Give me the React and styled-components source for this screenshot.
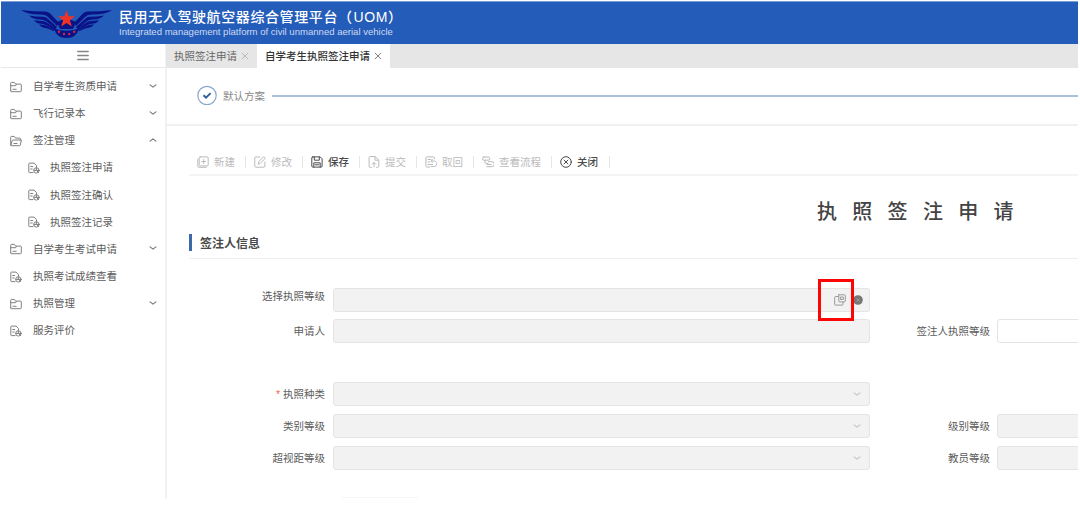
import React from 'react';
import styled, { createGlobalStyle } from 'styled-components';

const GlobalStyle = createGlobalStyle`
  * {
    box-sizing: border-box;
  }
  body {
    margin: 0;
    background: #fff;
    overflow: hidden;
    font-family: 'Liberation Sans', 'Noto Sans CJK SC', sans-serif;
    font-size: 10.5px;
    color: #5c5c5c;
  }
`;

const Page = styled.div`
  width: 1077px;
  height: 498px;
  margin: 1px 0 0 1px;
  display: flex;
  flex-direction: column;
  overflow: hidden;
  white-space: nowrap;
`;

const Header = styled.header`
  height: 43px;
  flex: none;
  display: flex;
  align-items: flex-start;
  padding: 8px 0 0 20px;
  background: #245cb9;
  border-top: 1px solid #7d9fd6;
  color: #fff;
`;

const Titles = styled.div`
  margin: -1px 0 0 7px;
`;

const Title = styled.h1`
  margin: 0;
  height: 17px;
  line-height: 17px;
  font-size: 14px;
  font-weight: 500;
  letter-spacing: 0.6px;

  .latin {
    margin-left: 1px;
  }
`;

const SubTitle = styled.div`
  height: 12px;
  line-height: 12px;
  font-size: 9.6px;
  letter-spacing: -0.02px;
  color: #cbdaf3;
`;

const Body = styled.div`
  display: flex;
  flex: 1;
  min-height: 0;
`;

const Sidebar = styled.aside`
  width: 166px;
  flex: none;
  border-right: 2px solid #f1f1f1;
`;

const Toggle = styled.div`
  height: 24px;
  display: flex;
  align-items: center;
  justify-content: center;
  border-bottom: 1px solid #e8e8e8;
`;

const Menu = styled.nav`
  padding-top: 4px;
`;

const MenuItem = styled.div`
  height: 27.15px;
  display: flex;
  align-items: center;
  padding: 0 7px 0 ${(p) => (p.$sub ? 27 : 9)}px;

  svg:first-child {
    margin-top: 2px;
  }
  .label {
    flex: 1;
    margin-left: ${(p) => (p.$sub ? 10 : 11)}px;
  }
`;

const Main = styled.main`
  flex: 1;
  min-width: 0;
  margin-left: -1px;
`;

const Tabs = styled.div`
  height: 24px;
  display: flex;
  background: #e6e6e6;
`;

const Tab = styled.div`
  display: flex;
  align-items: center;
  gap: 4px;
  padding: 0 8px 1px;
  background: ${(p) => (p.$active ? '#fff' : '#e6e6e6')};
  color: ${(p) => (p.$active ? '#333' : '#666')};
  font-weight: ${(p) => (p.$active ? 500 : 400)};
`;

const Steps = styled.div`
  height: 58px;
  display: flex;
  align-items: center;
  padding: 0 0 2px 31px;
  border-bottom: 2px solid #f0f0f0;
  color: #888;

  .name {
    margin: 0 7px 0 6px;
  }
`;

const StepLine = styled.div`
  flex: 1;
  height: 2px;
  margin-top: 2px;
  background: #a9c0dc;
`;

const Toolbar = styled.div`
  height: 27px;
  margin: 23px 0 0 23px;
  display: flex;
  align-items: center;
  padding-left: 8px;
  border-bottom: 2px solid #f4f4f4;
`;

const Tool = styled.div`
  width: ${(p) => p.$width}px;
  height: 12px;
  margin-right: 8px;
  display: flex;
  align-items: center;
  gap: 5px;
  border-right: 1px solid #e6e6e6;
  color: ${(p) => (p.$on ? '#4a4a4a' : '#bbb')};
  font-weight: ${(p) => (p.$on ? 500 : 400)};
`;

const FormTitle = styled.h2`
  height: 53px;
  line-height: 73px;
  margin: 0 0 0 651px;
  font-size: 20px;
  font-weight: 500;
  letter-spacing: 15.3px;
  color: #444;
`;

const Section = styled.div`
  height: 30px;
  margin-left: 23px;
  padding-bottom: 2px;
  display: flex;
  align-items: center;
  border-bottom: 1px solid #efefef;
  font-size: 12px;
  font-weight: 700;
  color: #4a4a4a;

  &::before {
    content: '';
    width: 3px;
    height: 17px;
    margin-right: 8px;
    background: #3a6aa8;
  }
`;

const Form = styled.div`
  padding-top: 28.5px;
`;

const FormRow = styled.div`
  height: 24px;
  display: flex;
  margin-bottom: ${(p) => p.$gap}px;
`;

const Label = styled.div`
  width: ${(p) => p.$width}px;
  flex: none;
  padding-right: ${(p) => (p.$tight ? 7 : 8)}px;
  line-height: ${(p) => (p.$raised ? 17 : 24)}px;
  text-align: right;

  .required {
    margin-right: 3px;
    color: #f0694a;
  }
`;

const Field = styled.div`
  width: 537px;
  height: 24px;
  flex: none;
  display: flex;
  align-items: center;
  justify-content: flex-end;
  padding-right: ${(p) => (p.$picker ? 6 : 7)}px;
  background: ${(p) => (p.$editable ? '#fff' : '#f2f2f2')};
  border: 1px solid #e4e4e4;
  border-radius: 3px;
`;

// taller than its field, so it has to stay above the next row
const Picker = styled.div`
  position: relative;
  z-index: 1;
  width: 36px;
  height: 42px;
  flex: none;
  display: flex;
  align-items: center;
  justify-content: center;
  padding-left: 8px;
  border: 3px solid #fb0505;
`;

const BottomEdge = styled.div`
  width: 76px;
  height: 1px;
  margin: 27px 0 0 176px;
  background: #f5f5f5;
`;

const Icon = ({ size = 12, color = 'currentColor', width = 1, children }) => (
  <svg
    width={size}
    height={size}
    viewBox="0 0 12 12"
    fill="none"
    stroke={color}
    strokeWidth={width}
    strokeLinecap="round"
    strokeLinejoin="round"
  >
    {children}
  </svg>
);

const icons = {
  folder: (
    <path d="M.7 9.8V2.2q0-.8.8-.8h2.8l1.2 1.7h5q.8 0 .8.8v6q0 .8-.8.8h-9q-.8 0-.8-.9ZM.7 4.7h5l.6-1.2M3 8.3h3.2" />
  ),
  open: (
    <path d="M.7 9.8V2.2q0-.8.8-.8h2.8l1.2 1.7h4.2q.7 0 .7.8v1M.8 10l1.5-4.4q.2-.6.8-.6h8.3l-1.1 5q-.2.7-.8.7h-8q-.8 0-.8-.9ZM4 8.5h3" />
  ),
  doc: (
    <>
      <path d="M5 10.6H1.5q-.7 0-.7-.7V1.8q0-.7.7-.7h4.6L8.5 3.7v1.5M2.7 4.5h2M2.7 7h1.5" />
      <circle cx="8.4" cy="8.4" r="2.7" fill="#fff" />
      <path d="M5.8 8.4h5.5M8.4 8.4l2.2 2.2M8.4 5.8v2.6" />
    </>
  ),
  add: (
    <path d="M3.2.9h7q1 0 1 1v7q0 1-1 1h-7q-1 0-1-1v-7q0-1 1-1ZM.8 3v7.3q0 1 1 1h7.5M6.7 3.5v4M4.7 5.5h4" />
  ),
  edit: (
    <path d="M6 1H1.8q-1 0-1 1v8.2q0 1 1 1h8.1q1 0 1-1V6M4.2 7.8l.4-2L9.7.7l1.6 1.6-5.1 5.1Z" />
  ),
  save: (
    <path d="M1.8.9h7.4l1.9 1.9v7.3q0 1-1 1H1.8q-1 0-1-1V1.9q0-1 1-1ZM3.3 1v3.2h5V1M2.8 11V6.8h6.4V11M4.2 8.8h3.6" />
  ),
  submit: (
    <path d="M3.5 11.3H2q-.9 0-.9-.9V1.5q0-.9.9-.9h5.2l3.6 3.5v6.3q0 .9-.9.9H8.5M7 .8v3.4h3.6M6 11V6.5M4.2 8.2 6 6.4l1.8 1.8" />
  ),
  back: (
    <path d="M5 11H1.8q-.9 0-.9-.9V1.8q0-.9.9-.9h6.6q.9 0 .9.9v1M3 3.5h3M3 6h2M3 8.5h4.5M6.3 10.5h2.2a2.8 2.8 0 1 0 0-5.5H6.3M7.6 3.7 6.2 5l1.4 1.3" />
  ),
  flow: (
    <path d="M2 1h4.2a1.6 1.6 0 0 1 0 3.2H2A1.6 1.6 0 0 1 2 1ZM3 4.2v2.2q0 .9 1 .9h2M6.4 5.7h3.4a1.5 1.5 0 0 1 0 5H4.8M5 8.5h4.2" />
  ),
  close: (
    <>
      <circle cx="6" cy="6" r="5.3" />
      <path d="m4.1 4.1 3.8 3.8M7.9 4.1 4.1 7.9" />
    </>
  ),
};

const Chevron = ({ up, color = '#777' }) => (
  <Icon size={10} color={color} width={1.4}>
    <path d={up ? 'm2.5 7.4 3.5-2.8 3.5 2.8' : 'm2.5 4.6 3.5 2.8 3.5-2.8'} />
  </Icon>
);

const Cross = ({ color }) => (
  <Icon size={8} color={color} width={1.4}>
    <path d="m1.8 1.8 8.4 8.4M10.2 1.8 1.8 10.2" />
  </Icon>
);

const Wing = () => (
  <>
    <path d="M0 0q13 1.5 24 1.5 4 0 6.5 3.5l7.5 8-2 3-8.5-8.5Q25 4.5 20 4.5 6 4.500 0 0Z" />
    <path d="M8 5.500q7 1.300 14 1.300 3 0 5 2.200l9 8-1.500 2-9-7.500q-2.500-2-6.500-2Q12 9.500 8 5.500Z" />
    <path d="M13 10.300q5 .7 8 .7 3 0 5 1.700l8 5.500v2.300l-8.500-5Q23 13.800 20 13.800 15.500 13.800 13 10.300Z" />
    <path d="M18 14.600q5-.3 8 1.500l7 4v1.200q-6-3-9-3.300-4-.4-6-3.400Z" />
  </>
);

// winged badge with a red star
const Logo = () => (
  <svg width="91" height="29" viewBox="0 0 91 29" fill="#0a1287">
    <Wing />
    <g transform="translate(91 0) scale(-1 1)">
      <Wing />
    </g>
    <path d="M33 18.500q12.500 4.500 25 0-2.500 9.500-12.500 9.500T33 18.500Z" />
    <path d="m36 12 5-2h9l5 2-3 7H39Z" />
    <path
      d="m45.500 0 2.100 6.200 6.500.1-5.200 4 1.900 6.300-5.300-3.700-5.300 3.700 1.900-6.300-5.200-4 6.500-.1Z"
      fill="#f03328"
    />
    <g fill="#d42845">
      <circle cx="38" cy="21.800" r="1.200" />
      <circle cx="43" cy="24" r="1.200" />
      <circle cx="48.200" cy="24" r="1.200" />
      <circle cx="53.200" cy="21.800" r="1.200" />
    </g>
  </svg>
);

const menu = [
  { text: '自学考生资质申请', icon: 'folder', arrow: 'down' },
  { text: '飞行记录本', icon: 'folder', arrow: 'down' },
  { text: '签注管理', icon: 'open', arrow: 'up' },
  { text: '执照签注申请', icon: 'doc', sub: true },
  { text: '执照签注确认', icon: 'doc', sub: true },
  { text: '执照签注记录', icon: 'doc', sub: true },
  { text: '自学考生考试申请', icon: 'folder', arrow: 'down' },
  { text: '执照考试成绩查看', icon: 'doc' },
  { text: '执照管理', icon: 'folder', arrow: 'down' },
  { text: '服务评价', icon: 'doc' },
];

const tools = [
  { text: '新建', icon: 'add', width: 49 },
  { text: '修改', icon: 'edit', width: 49 },
  { text: '保存', icon: 'save', width: 49, on: true },
  { text: '提交', icon: 'submit', width: 49 },
  { text: '取回', icon: 'back', width: 49 },
  { text: '查看流程', icon: 'flow', width: 70 },
  { text: '关闭', icon: 'close', width: 50, on: true },
];

const rows = [
  { label: '选择执照等级', picker: true, gap: 7.7 },
  { label: '申请人', right: '签注人执照等级', editable: true, gap: 39.3 },
  { label: '执照种类', required: true, select: true, gap: 7.7 },
  { label: '类别等级', select: true, right: '级别等级', gap: 7.7 },
  { label: '超视距等级', select: true, right: '教员等级', gap: 0 },
];

export default function App() {
  return (
    <>
      <GlobalStyle />
      <Page>
        <Header>
          <Logo />
          <Titles>
            <Title>
              民用无人驾驶航空器综合管理平台（<span className="latin">UOM</span>）
            </Title>
            <SubTitle>
              Integrated management platform of civil unmanned aerial vehicle
            </SubTitle>
          </Titles>
        </Header>

        <Body>
          <Sidebar>
            <Toggle>
              <Icon color="#858585" width={1.4}>
                <path d="M.8 1.5h10.4M.8 5.5h10.4M.8 9.5h10.4" />
              </Icon>
            </Toggle>
            <Menu>
              {menu.map((item) => (
                <MenuItem key={item.text} $sub={item.sub}>
                  <Icon color="#808080">{icons[item.icon]}</Icon>
                  <span className="label">{item.text}</span>
                  {item.arrow && <Chevron up={item.arrow === 'up'} />}
                </MenuItem>
              ))}
            </Menu>
          </Sidebar>

          <Main>
            <Tabs>
              <Tab>
                执照签注申请
                <Cross color="#b5b5b5" />
              </Tab>
              <Tab $active>
                自学考生执照签注申请
                <Cross color="#777" />
              </Tab>
            </Tabs>

            <Steps>
              <svg width="20" height="20" viewBox="0 0 20 20" fill="none">
                <circle cx="10" cy="10.5" r="9.2" stroke="#88a8ce" strokeWidth="1.2" />
                <path d="m6.5 10.3 2.5 2.3 4.6-4.5" stroke="#315f9f" strokeWidth="2" />
              </svg>
              <span className="name">默认方案</span>
              <StepLine />
            </Steps>

            <Toolbar>
              {tools.map((tool) => (
                <Tool key={tool.text} $width={tool.width} $on={tool.on}>
                  <Icon>{icons[tool.icon]}</Icon>
                  {tool.text}
                </Tool>
              ))}
            </Toolbar>

            <FormTitle>执照签注申请</FormTitle>
            <Section>签注人信息</Section>

            <Form>
              {rows.map((row) => (
                <FormRow key={row.label} $gap={row.gap}>
                  <Label $width={167} $raised={row.picker}>
                    {row.required && <span className="required">*</span>}
                    {row.label}
                  </Label>
                  <Field $picker={row.picker}>
                    {row.select && <Chevron color="#c4c4c4" />}
                    {row.picker && (
                      <>
                        <Picker>
                          <Icon color="#999">
                            <path d="M4 2.5H1.5q-.8 0-.8.8v7q0 .8.8.8h6.7q.8 0 .8-.8V8.5M4.8.8h5.7q.8 0 .8.8v5.5q0 .8-.8.8H5.6q-.8 0-.8-.8V.8ZM6.8 3h2.5v2.5H6.8Z" />
                          </Icon>
                        </Picker>
                        <svg width="9" height="10" viewBox="1 0 9 10">
                          <circle cx="5" cy="5" r="4.8" fill="#777" />
                          <path d="m3.3 3.3 3.4 3.4M6.7 3.3 3.3 6.7" stroke="#999" />
                        </svg>
                      </>
                    )}
                  </Field>
                  {row.right && (
                    <>
                      <Label $width={127} $tight>
                        {row.right}
                      </Label>
                      <Field $editable={row.editable} />
                    </>
                  )}
                </FormRow>
              ))}
            </Form>
            <BottomEdge />
          </Main>
        </Body>
      </Page>
    </>
  );
}
